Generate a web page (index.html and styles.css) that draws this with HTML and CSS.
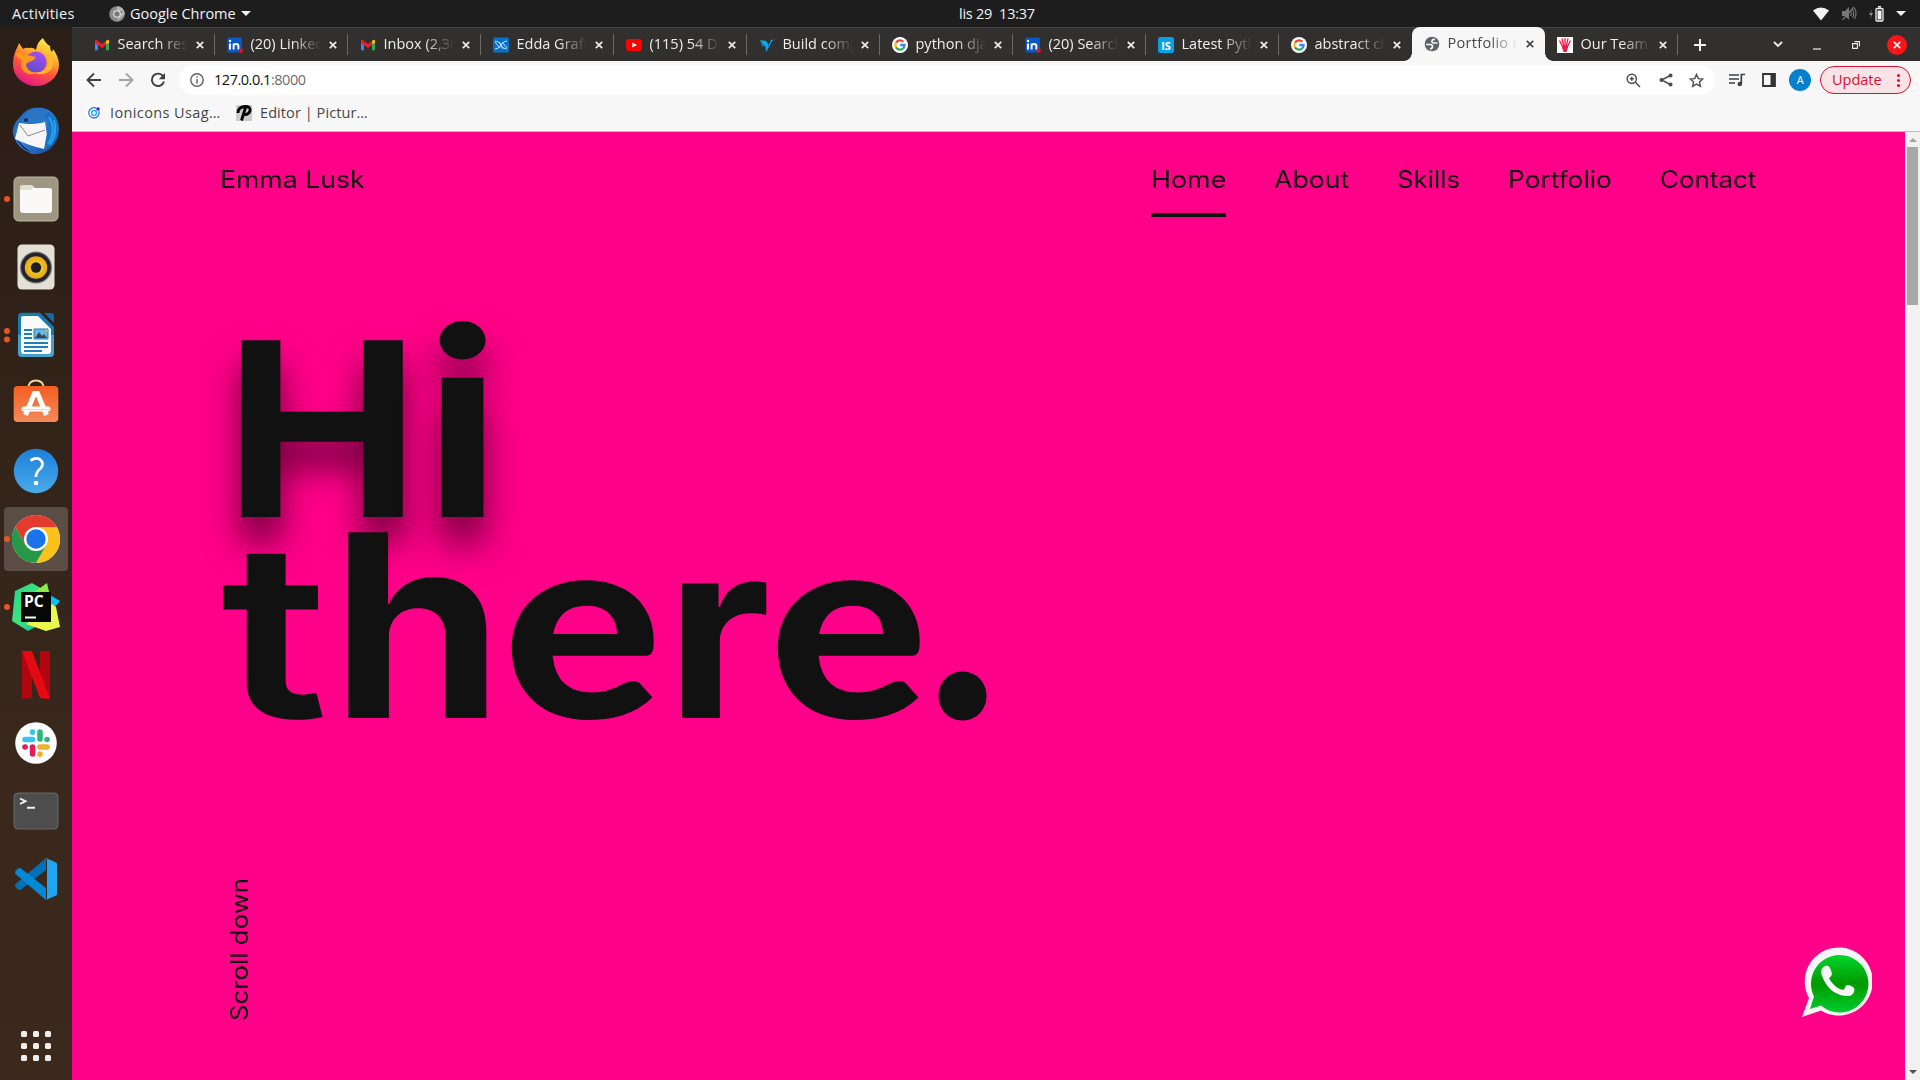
FILE: index.html
```html
<!DOCTYPE html>
<html lang="en">
<head>
<meta charset="utf-8">
<title>Portfolio</title>
<link rel="stylesheet" href="styles.css">
</head>
<body>
<svg class="defs" width="0" height="0">
  <defs>
    <linearGradient id="ffOuter" x1=".8" y1="0" x2=".35" y2="1"><stop offset="0" stop-color="#fff44f"/><stop offset=".35" stop-color="#ffb02e"/><stop offset=".62" stop-color="#ff5a36"/><stop offset="1" stop-color="#e31587"/></linearGradient>
    <linearGradient id="ffGlobe" x1=".7" y1="0" x2=".3" y2="1"><stop offset="0" stop-color="#a94df0"/><stop offset="1" stop-color="#5b4fd0"/></linearGradient>
    <linearGradient id="tb" x1="0" y1="0" x2="1" y2="1"><stop offset="0" stop-color="#1b5fb8"/><stop offset=".5" stop-color="#2c7fd4"/><stop offset="1" stop-color="#1a3f91"/></linearGradient>
    <linearGradient id="orange" x1="0" y1="0" x2="0" y2="1"><stop offset="0" stop-color="#f55d22"/><stop offset="1" stop-color="#f38a5c"/></linearGradient>
    <linearGradient id="help" x1="0" y1="0" x2="0" y2="1"><stop offset="0" stop-color="#1b7fd9"/><stop offset="1" stop-color="#4aabe9"/></linearGradient>
    <linearGradient id="wa" x1="0" y1="0" x2="0" y2="1"><stop offset="0" stop-color="#00d42c"/><stop offset=".5" stop-color="#009a00"/><stop offset="1" stop-color="#00cc2c"/></linearGradient>
    <linearGradient id="pc" x1="0" y1="0" x2="1" y2="1"><stop offset="0" stop-color="#21d789"/><stop offset=".5" stop-color="#3ee27e"/><stop offset="1" stop-color="#0fb8a0"/></linearGradient>
    <radialGradient id="cone"><stop offset="0" stop-color="#ffd84a"/><stop offset="1" stop-color="#e3a90f"/></radialGradient>
  </defs>
  <symbol id="x" viewBox="0 0 8 8"><path d="M.8.8l6.4 6.4M7.2.8L.8 7.2" fill="none" stroke="currentColor" stroke-width="1.7"/></symbol>
  <symbol id="gmail" viewBox="0 0 16 16"><path d="M1 4v9.300h3V7z" fill="#4285f4"/><path d="M15 4v9.300h-3V7z" fill="#34a853"/><path d="M12 7V4l1.500-1.200Q15 2.500 15 4v2z" fill="#fbbc04"/><path d="M4 4L2.500 2.800Q1 2.500 1 4v2l7 5 4-3V4L8 7z" fill="#ea1d2d"/></symbol>
  <symbol id="linkedin" viewBox="0 0 16 16"><rect width="14.500" height="15" x=".5" y=".5" rx="1.500" fill="#0a58c4"/><path d="M3 6.500v6" stroke="#fff" stroke-width="2"/><circle cx="3" cy="4" r="1.200" fill="#fff"/><path d="M6.600 12.500v-6M6.600 9q0-2 2.400-2t2.400 2v3.500" fill="none" stroke="#fff" stroke-width="1.900"/><circle cx="13.700" cy="13.700" r="2.200" fill="#e81123"/></symbol>
  <symbol id="google" viewBox="0 0 16 16"><circle cx="8" cy="8" r="8" fill="#fff"/><g fill="none" stroke-width="2.300"><path d="M4 5.600A4.700 4.700 0 0 1 11.400 4.700" stroke="#ea4335"/><path d="M4 5.600A4.700 4.700 0 0 0 4 10.400" stroke="#fbbc05"/><path d="M4 10.400A4.700 4.700 0 0 0 11.200 11.400" stroke="#34a853"/><path d="M11.200 11.400A4.700 4.700 0 0 0 12.600 8H8.200" stroke="#4285f4"/></g></symbol>
</svg>

<div class="screen">
  <header class="panel">
    <span class="activities">Activities</span>
    <span class="app">
      <svg width="16" height="16" viewBox="0 0 16 16"><circle cx="8" cy="8" r="7.800" fill="#8a8a8a"/><path d="M8 .2A7.800 7.800 0 0 1 15.800 8L8 15.800 11 9 14.500 5H8z" fill="#b5b5b5"/><circle cx="8" cy="8" r="3.800" fill="#e8e8e8"/><circle cx="8" cy="8" r="2.700" fill="#777"/></svg>
      Google Chrome<i class="caret"></i>
    </span>
    <span class="clock">lis 29&nbsp; 13:37</span>
    <span class="status">
      <svg width="16" height="14" viewBox="0 0 16 14"><path d="M0 3.500Q8-2.500 16 3.500L8 13.500z" fill="#f2f2f2"/></svg>
      <svg width="16" height="15" viewBox="0 0 16 15"><path d="M1 5h3l4-4v13L4 10H1z" fill="#777"/><path d="M9.500 5q1.500 2.500 0 5M11.500 3.500q2.500 4 0 8M13.500 2q3 5.500 0 11M1.500 14L13 1" fill="none" stroke="#777" stroke-width="1.200"/></svg>
      <svg width="15" height="16" viewBox="0 0 15 16"><path d="M3 3L0 9h2l-1 4 3-6H2z" fill="#888"/><rect x="7" y="2.500" width="7" height="12.500" rx="1" fill="none" stroke="#f2f2f2" stroke-width="1.300"/><path d="M9 .8h3" stroke="#f2f2f2" stroke-width="1.600"/><path d="M8.500 4.500h4V13.500h-4z" fill="#f2f2f2"/></svg>
      <i class="caret"></i>
    </span>
  </header>

  <div class="desktop">
    <nav class="dock">
      <div class="cell"><svg width="46" height="48" viewBox="0 0 46 48"><path d="M3 12Q5 8 6 5l4 6q3-2 6-1 4-1 7 2Q24 4 30 0q2 5 7 8 0 4 2 6 1-2 1-3 6 8 6 16a23 21 0 0 1-46 0Q0 18 3 12z" fill="url(#ffOuter)"/><circle cx="23" cy="24" r="10.500" fill="url(#ffGlobe)"/><path d="M2 16q6-3 11 1 5 1 10 2-2 4-7 5-3 1-3 4 2 6 10 7-9 4-14-4-2-5 0-9-4-2-7-6z" fill="#ff9a1f"/><path d="M33 18q4 7-1 13-5 5-13 3 13 6 20-4 3-7-2-13z" fill="#ffb62e"/></svg></div>
      <div class="cell"><svg width="48" height="48" viewBox="0 0 48 48"><path d="M8 10Q14 2 21 1q18-3 25 14 4 16-8 27-8 6-18 5-14-5-18-17Q-2 20 8 10z" fill="url(#tb)"/><path d="M12 10q4-8 12-9 9 2 9 9-1 5-9 6-7 0-14-1z" fill="#2b75c6"/><path d="M4 31q5 10 14 14L9 37z" fill="#1b1147"/><path d="M7 16l9 1q10 0 17-2l2 13-3 14q-14-3-29-10z" fill="#f6f6f8"/><path d="M8 18l8 11 17-6" fill="none" stroke="#888" stroke-width="1"/><path d="M31 9q8 7 4 17-2 8-2 17 11-7 13-17 1-13-9-21z" fill="#1972c4"/><path d="M37 10q8 13-1 27M42 13q4 13-4 25" stroke="#2aa0ea" stroke-width="2" fill="none"/><circle cx="14" cy="13" r="2" fill="#16335a"/></svg></div>
      <div class="cell"><i class="dot"></i><svg width="46" height="46" viewBox="0 0 46 46"><rect x="1" y="1" width="44" height="44" rx="4.500" fill="#9f9681" stroke="#bbb5a4"/><path d="M7 12q0-3 2-3h10l3 3H36q3 0 3 3v8H7z" fill="#e3dfd3"/><rect x="7" y="12" width="32" height="25" rx="3" fill="#faf9f8"/><path d="M7 11h13l-2 3H7z" fill="#e3dfd3"/></svg></div>
      <div class="cell"><svg width="38" height="46" viewBox="0 0 38 46"><rect x=".5" y=".5" width="37" height="45" rx="4.500" fill="#e5e0d6"/><circle cx="19" cy="23.500" r="16" fill="#6f7079"/><circle cx="19" cy="23.500" r="14.800" fill="#23232b"/><circle cx="19" cy="23.500" r="11.300" fill="url(#cone)"/><circle cx="19" cy="23.500" r="5.200" fill="#1e1e20"/></svg></div>
      <div class="cell"><i class="dot two"></i><svg width="38" height="46" viewBox="0 0 38 46"><path d="M5 .8H23L37 15v26q0 4-4 4H5q-4 0-4-4V5q0-4.200 4-4.200z" fill="#167bb3"/><path d="M1 23h36v18q0 4-4 4H5q-4 0-4-4z" fill="#469ecb"/><path d="M6 4h15l13 13v22q0 3-3 3H7q-3 0-3-3V6q0-2 2-2z" fill="#fafafa"/><path d="M27 1h7q3 0 3 3v7z" fill="#0d6ca5"/><path d="M7 18h8M7 22h8M7 26h8M7 31h24M7 35h24M7 39h18" stroke="#1d80b9" stroke-width="2"/><path d="M17 17h14v10H17z" fill="#69b8e1" stroke="#1d80b9"/><path d="M18 26l4-6 3 4 2-2 3 4z" fill="#3c4650"/><path d="M28 17.500h2.500v3z" fill="#ffbd25"/></svg></div>
      <div class="cell"><svg class="up" width="46" height="44" viewBox="0 0 46 44"><path d="M15 9Q16 1.500 23 1.500T31 9" fill="none" stroke="#efd59d" stroke-width="1.800"/><rect x=".7" y="7" width="44.600" height="36" rx="4" fill="url(#orange)"/><path d="M12.500 36L21.500 14.500h3L33.500 36" fill="none" stroke="#fff" stroke-width="5"/><path d="M11 30h24" stroke="#fff" stroke-width="5" stroke-linecap="round"/><path d="M9 30.500h28" stroke="#eecdbb" stroke-width=".8"/></svg></div>
      <div class="cell"><svg width="46" height="46" viewBox="0 0 46 46"><circle cx="23" cy="23" r="22.200" fill="url(#help)"/><path d="M17.500 12.500Q23 9 27 11.500 31.500 15 28 20 23 24 23 28v1" fill="none" stroke="#fff" stroke-width="2.800"/><circle cx="23" cy="35" r="2.300" fill="#fff"/></svg></div>
      <div class="cell active"><i class="dot"></i><svg width="48" height="48" viewBox="0 0 48 48"><circle cx="24" cy="24" r="24" fill="#fff"/><path d="M24 24V12H44.800A24 24 0 0 0 3.200 12L13.600 30z" fill="#e33b2e"/><path d="M24 12H44.800A24 24 0 0 1 24 48L34.400 30z" fill="#fcc219"/><path d="M13.600 30L3.200 12A24 24 0 0 0 24 48L34.400 30z" fill="#279847"/><circle cx="24" cy="24" r="12" fill="#fff"/><circle cx="24" cy="24" r="9.700" fill="#1a73e8"/></svg></div>
      <div class="cell"><i class="dot"></i><svg width="48" height="48" viewBox="0 0 48 48"><path d="M3 8L20 0l12 7-5 35-11 6L0 38z" fill="url(#pc)"/><path d="M21 10L35 0l3 13-12 5z" fill="#8bea4c"/><path d="M38 12l10 6-8 9-6-8z" fill="#07c3f2"/><path d="M14 41l26-20 4 3 4 20-14 4z" fill="#e9f84a"/><path d="M9 9h30v30H9z" fill="#050805"/><text class="pc-text" x="12" y="23.500">PC</text><path d="M13 34.500h11" stroke="#fff" stroke-width="2"/></svg></div>
      <div class="cell"><svg width="28" height="48" viewBox="0 0 28 48"><path d="M0 0h10v47L0 48zM18 0h10v48l-10-1z" fill="#b1060f"/><path d="M0 0h10l18 48-10-1z" fill="#e50914"/></svg></div>
      <div class="cell"><svg width="42" height="42" viewBox="0 0 42 42"><circle cx="21" cy="21" r="20.800" fill="#fff"/><g stroke-width="5.600" stroke-linecap="round"><path d="M10 17.500h7.500M17.500 10v.1" stroke="#36c5f0"/><path d="M25 10v7M32 17.500h.1" stroke="#2eb67d"/><path d="M25 25h7M25 32v.1" stroke="#ecb22e"/><path d="M17.500 25v7M10 25h.1" stroke="#e01e5a"/></g></svg></div>
      <div class="cell"><svg width="46" height="38" viewBox="0 0 46 38"><rect x="1" y="1" width="44" height="36" rx="4" fill="#4d4d4d" stroke="#696969"/><path d="M7 6.500l5.500 2.700L7 12M14 15.800h8" fill="none" stroke="#f2f2f2" stroke-width="1.900"/></svg></div>
      <div class="cell"><svg width="42" height="42" viewBox="0 0 42 42"><path d="M31 0v12L6 31.500q-2 1-3 0L.5 29q-1-1.500 0-3z" fill="#0070b7"/><path d="M31 42V30L6 10.500q-2-1-3 0L.5 13q-1 1.500 0 3z" fill="#0089d6"/><path d="M31 0l10 4.500q1 .5 1 1.500v30q0 1-1 1.500L31 42q1-1 1-2V2z" fill="#22a5f1"/></svg></div>
      <div class="apps"><i></i><i></i><i></i><i></i><i></i><i></i><i></i><i></i><i></i></div>
    </nav>

    <section class="browser">
      <div class="tabs">
        <div class="tab"><svg class="fav"><use href="#gmail"/></svg><span>Search results</span><svg class="close"><use href="#x"/></svg></div>
        <div class="tab"><svg class="fav"><use href="#linkedin"/></svg><span>(20) LinkedIn</span><svg class="close"><use href="#x"/></svg></div>
        <div class="tab"><svg class="fav"><use href="#gmail"/></svg><span>Inbox (2,304)</span><svg class="close"><use href="#x"/></svg></div>
        <div class="tab"><svg class="fav" viewBox="0 0 16 16"><rect width="16" height="15" y=".5" rx="1.500" fill="#0870c8"/><path d="M2 4q4 0 6 4t6 4M2 12q4 0 6-4t6-4M2 5l5 6M9 5l5 6M6 5l3 3M7 8l3 4" fill="none" stroke="#b9e2ff" stroke-width="1"/></svg><span>Edda Grafika</span><svg class="close"><use href="#x"/></svg></div>
        <div class="tab"><svg class="fav" viewBox="0 0 16 16"><rect width="16" height="12" y="2" rx="3" fill="#f00"/><path d="M6.300 5.500v5L11 8z" fill="#fff"/></svg><span>(115) 54 Django</span><svg class="close"><use href="#x"/></svg></div>
        <div class="tab"><svg class="fav" viewBox="0 0 16 16"><path d="M1 3l6 1 3 4 2-5 4-.5-3 1.500-3 6-3 5-.5-5z" fill="#12a6ee"/><path d="M1 3l7 7-5-1zM7 4l3 4v3z" fill="#0786cc"/></svg><span>Build components</span><svg class="close"><use href="#x"/></svg></div>
        <div class="tab"><svg class="fav"><use href="#google"/></svg><span>python django</span><svg class="close"><use href="#x"/></svg></div>
        <div class="tab"><svg class="fav"><use href="#linkedin"/></svg><span>(20) Search</span><svg class="close"><use href="#x"/></svg></div>
        <div class="tab"><svg class="fav" viewBox="0 0 16 16"><rect width="16" height="16" rx="2.500" fill="#0aa0e8"/><text class="is-text" x="8" y="12.500">IS</text></svg><span>Latest Python</span><svg class="close"><use href="#x"/></svg></div>
        <div class="tab last"><svg class="fav"><use href="#google"/></svg><span>abstract clip</span><svg class="close"><use href="#x"/></svg></div>
        <div class="tab current"><svg class="fav" viewBox="0 0 16 16"><circle cx="8" cy="8" r="7.300" fill="#5f6368"/><path d="M2 8.500h4.500q2 0 2 2T6 13M13.500 7H10Q7.500 7 8 5t3-1.500" fill="none" stroke="#f7f7f7" stroke-width="1.700"/></svg><span>Portfolio new</span><svg class="close"><use href="#x"/></svg></div>
        <div class="tab"><svg class="fav" viewBox="0 0 16 16"><path d="M0 0h16v16H0z" fill="#fff"/><path d="M8 1v14M5 1.500l2 9M11 1.500l-2 9M2.500 3.500l4.500 9M13.500 3.500l-4.500 9" fill="none" stroke="#ef1746" stroke-width="1.300"/><path d="M5 10h6l-1.500 5h-3z" fill="#ef1746"/></svg><span>Our Team</span><svg class="close"><use href="#x"/></svg></div>
        <svg class="plus" width="12" height="12" viewBox="0 0 12 12"><path d="M6 0v12M0 6h12" stroke="#f2f2f2" stroke-width="2"/></svg>
        <div class="window">
          <svg width="10" height="7" viewBox="0 0 10 7"><path d="M1 1l4 4 4-4" fill="none" stroke="#eee" stroke-width="1.800"/></svg>
          <svg width="8" height="7" viewBox="0 0 8 7"><path d="M0 5h8" stroke="#eee" stroke-width="1.200"/></svg>
          <svg width="8" height="8" viewBox="0 0 8 8"><path d="M.6 2.600h4.800v4.800H.6zM2.500.6h4.900v5" fill="none" stroke="#eee" stroke-width="1.100"/></svg>
          <b><svg class="close"><use href="#x"/></svg></b>
        </div>
      </div>

      <div class="toolbar">
        <svg width="16" height="16" viewBox="0 0 16 16"><path d="M15 8H2M8 1.500L1.500 8 8 14.500" fill="none" stroke="#3c4043" stroke-width="1.900"/></svg>
        <svg width="16" height="16" viewBox="0 0 16 16"><path d="M1 8h13M8 1.500L14.500 8 8 14.500" fill="none" stroke="#a3a4a6" stroke-width="1.900"/></svg>
        <svg width="16" height="16" viewBox="0 0 16 16"><path d="M13.300 4.500A6.200 6.200 0 1 0 14 9.500" fill="none" stroke="#3c4043" stroke-width="1.900"/><path d="M15 1v6.200H8.800z" fill="#3c4043"/></svg>
        <div class="omnibox">
          <svg width="14" height="14" viewBox="0 0 14 14"><circle cx="7" cy="7" r="6.200" fill="none" stroke="#5f6368" stroke-width="1.400"/><path d="M7 6v4.500M7 3.300v1.500" stroke="#5f6368" stroke-width="1.500"/></svg>
          <span class="url">127.0.0.1<em>:8000</em></span>
          <svg width="15" height="15" viewBox="0 0 15 15"><circle cx="5.800" cy="5.800" r="4.600" fill="none" stroke="#4a4d51" stroke-width="1.500"/><path d="M9.300 9.300l4.700 4.700M3.800 5.800h4M5.800 3.800v4" stroke="#4a4d51" stroke-width="1.500"/></svg>
          <svg width="14" height="14" viewBox="0 0 14 14"><path d="M11.500 2.500L2.500 7l9 4.500" fill="none" stroke="#4a4d51" stroke-width="1.400"/><circle cx="11.500" cy="2.500" r="2" fill="#4a4d51"/><circle cx="2.500" cy="7" r="2" fill="#4a4d51"/><circle cx="11.500" cy="11.500" r="2" fill="#4a4d51"/></svg>
          <svg width="15" height="15" viewBox="0 0 15 15"><path d="M7.500 1.500l1.800 4.100 4.500.4-3.400 3 1 4.400-3.900-2.300-3.900 2.300 1-4.400-3.400-3 4.500-.4z" fill="none" stroke="#4a4d51" stroke-width="1.400"/></svg>
        </div>
        <div class="actions">
          <svg width="16" height="14" viewBox="0 0 16 14"><path d="M0 2h10M0 6h10M0 10h6M12.300 11V1.500H16" fill="none" stroke="#3c4043" stroke-width="1.700"/><circle cx="10.800" cy="11" r="2.300" fill="#3c4043"/></svg>
          <svg width="14" height="14" viewBox="0 0 14 14"><path d="M1 1h12v12H1z" fill="none" stroke="#333" stroke-width="1.800"/><path d="M8.500 1H13v12H8.500z" fill="#333"/></svg>
          <span class="avatar">A</span>
          <span class="update">Update<i></i></span>
        </div>
      </div>

      <div class="bookmarks">
        <svg width="16" height="16" viewBox="0 0 16 16"><circle cx="8" cy="8" r="8" fill="#fff"/><path d="M10.500 3.300A5.200 5.200 0 1 0 12.800 6" fill="none" stroke="#3c6cf4" stroke-width="1.300"/><circle cx="8" cy="8" r="2.400" fill="none" stroke="#16b8f4" stroke-width="1.500"/><circle cx="12" cy="4" r="1.800" fill="#4524e6"/></svg>
        <span class="ion">Ionicons Usag…</span>
        <svg class="pic" width="16" height="16" viewBox="0 0 16 16"><path d="M0 0h16v16H0z" fill="#ccc"/><path d="M9.500 2.500L5.500 15.500M2 8Q2 2 9 1.500q6 0 5 4.500-1.500 4-6 3.500" fill="none" stroke="#000" stroke-width="2.800"/></svg>
        <span class="edit">Editor | Pictur…</span>
      </div>

      <div class="viewport">
        <main class="page">
          <header class="site">
            <a class="brand">Emma Lusk</a>
            <nav class="menu">
              <a class="home"><span>Home</span></a><a class="about"><span>About</span></a><a class="skills"><span>Skills</span></a><a class="portfolio"><span>Portfolio</span></a><a class="contact"><span>Contact</span></a>
            </nav>
          </header>
          <h1 class="title">
            <span class="line hi"><span class="g-cap">H</span><span class="g-i">i</span></span>
            <span class="line"><span class="g-t">t</span><span class="g-h">h</span><span class="g-e">e</span><span class="g-r">r</span><span class="g-e g-e2">e</span><span class="g-dot">.</span></span>
          </h1>
          <a class="scroll">Scroll down</a>
          <svg class="whatsapp" width="70" height="72" viewBox="0 0 70 72"><path d="M0 71L7 52A34 34 0 1 1 19 64.500z" fill="#f5f5f5"/><path d="M8 63l4-12.500A28.700 28.700 0 1 1 19 59.500z" fill="url(#wa)"/><path d="M19 27Q19.500 20 24.500 19.500q4 0 5.500 9-2 3-3 4Q33.500 43 41.500 44l3-5q6 0 8 4 0 8-9 7Q25.500 48 19 27z" fill="#f7f7f7"/></svg>
        </main>
        <div class="scrollbar"><i class="arrow-up"></i><i class="thumb"></i><i class="arrow-down"></i></div>
      </div>
    </section>
  </div>
</div>
</body>
</html>
```
FILE: styles.css
```css
* { box-sizing: border-box; }
body {
  margin: 0;
  font: 14.5px/20px "Open Sans", "Noto Sans", sans-serif;
  overflow: hidden;
}
svg { flex: none; display: block; }
.defs { position: absolute; }
.screen { width: 1920px; height: 1080px; display: flex; flex-direction: column; }

/* top panel */
.panel {
  height: 27px;
  flex: none;
  background: #1d1d1d;
  color: #f2f2f2;
  display: grid;
  grid-template-columns: 97px 850px 1fr auto;
  align-items: center;
  padding: 0 14px 0 12px;
}
.activities { letter-spacing: .3px; }
.app { display: flex; align-items: center; gap: 5px; }
.clock { letter-spacing: -.25px; }
.status { display: flex; align-items: center; gap: 12px; }
.caret { border: 5px solid transparent; border-top: 5px solid #f2f2f2; border-bottom: 0; }

/* dock */
.desktop { flex: 1; display: flex; min-height: 0; }
.dock {
  width: 72px;
  flex: none;
  background: linear-gradient(#2b1e16, #3a281c 75%, #3c281d);
  display: flex;
  flex-direction: column;
  padding-top: 2px;
}
.cell { height: 68px; display: flex; align-items: center; justify-content: center; position: relative; }
.cell:first-child svg { margin-top: -2px; }
.cell.active::before { content: ""; position: absolute; inset: 2px 4px; border-radius: 4px; background: rgba(255, 255, 255, .19); }
.cell svg { position: relative; }
.cell .up { margin-top: -4px; }
.dot { position: absolute; left: 4px; top: 31px; width: 6px; height: 6px; border-radius: 50%; background: #e95420; }
.dot.two { top: 27px; box-shadow: 0 8.5px 0 #e95420; }
.pc-text { font: 700 15.500px "Open Sans", sans-serif; fill: #fff; }
.apps { margin: auto auto 19px; display: grid; grid-template-columns: repeat(3, 6px); gap: 6px; }
.apps i { height: 6px; border-radius: 1.5px; background: #f0eeed; }

/* tab strip */
.browser { flex: 1; display: flex; flex-direction: column; min-width: 0; }
.tabs {
  height: 34px;
  flex: none;
  background: #32302f;
  border-top: 1px solid #464443;
  display: flex;
  align-items: center;
  padding-left: 10px;
  color: #eee;
}
.tab { width: 133px; height: 33px; flex: none; display: flex; align-items: center; padding-left: 11.500px; position: relative; }
.tab::after { content: ""; position: absolute; right: 0; top: 6px; width: 1px; height: 21px; background: #6a6968; }
.tab.current::after, .tab.last::after { display: none; }
.fav { width: 16px; height: 16px; margin-right: 8px; }
.tab span {
  width: 70px;
  margin-top: -2px;
  overflow: hidden;
  white-space: nowrap;
  -webkit-mask-image: linear-gradient(90deg, #000 58%, transparent);
  mask-image: linear-gradient(90deg, #000 58%, transparent);
}
.close { width: 8px; height: 8px; }
.tab .close { margin-left: 8px; }
.tab.current { background: #f7f7f7; color: #45474a; border-radius: 8px 8px 0 0; height: 34px; margin-top: -1px; }
.tab.current::before { content: ""; position: absolute; left: -8px; right: -8px; bottom: 0; height: 8px; background: radial-gradient(circle at 0 0, transparent 7.500px, #f7f7f7 8px) left / 8px 8px no-repeat, radial-gradient(circle at 100% 0, transparent 7.500px, #f7f7f7 8px) right / 8px 8px no-repeat; }
.tab.current span { letter-spacing: .3px; }
.is-text { font: 700 11px "Open Sans", sans-serif; fill: #fff; text-anchor: middle; }
.plus { margin-left: 16px; }
.window { margin-left: auto; padding-right: 13px; display: flex; align-items: center; }
.window > :nth-child(2) { margin: 6px 35px 0 30px; }
.window b { width: 20px; height: 20px; border-radius: 50%; background: #fb1418; display: grid; place-items: center; margin-left: 27px; }
.window > :nth-child(1) { margin-right: 0; }
.window > :nth-child(3) { margin-left: -4px; }

/* toolbar */
.toolbar { height: 38px; flex: none; background: #f7f7f7; display: flex; align-items: center; padding: 0 9px 0 14px; gap: 16px; }
.omnibox { width: 1536px; height: 30px; margin-left: -3px; border-radius: 15px; background: #fff; display: flex; align-items: center; padding: 0 11px; }
.url { flex: 1; margin-left: 10px; color: #111; letter-spacing: -.47px; }
.url em { font-style: normal; color: #6b6e72; }
.omnibox > :nth-child(4) { margin: 0 16px 0 18px; }
.actions { flex: 1; display: flex; align-items: center; justify-content: space-between; margin-left: -2px; }
.actions > :nth-child(2) { margin-left: 8px; }
.avatar { width: 22px; height: 22px; margin-left: 5px; border-radius: 50%; background: #0680cd; color: #fff; font-size: 11px; line-height: 22px; text-align: center; }
.update { width: 91px; height: 28px; border: 1.500px solid #d9102f; border-radius: 14px; background: #f9e3e6; color: #d9102f; display: flex; align-items: center; justify-content: space-between; padding: 0 10px 0 11px; }
.update i { width: 3px; height: 3px; border-radius: 50%; background: #e00b2b; box-shadow: 0 -5px #e00b2b, 0 5px #e00b2b; }

/* bookmarks */
.bookmarks { height: 33px; flex: none; background: #f7f7f7; border-bottom: 1px solid #bdbdbd; display: flex; align-items: center; padding: 0 0 4px 14px; color: #45474a; gap: 8px; }
.ion { letter-spacing: .38px; width: 110px; white-space: nowrap; }
.edit { letter-spacing: .08px; }
.pic { margin-left: 8px; }

/* page */
.viewport { flex: 1; display: flex; min-height: 0; }
.page { flex: 1; position: relative; background: #ff0088; color: #111; font-family: Inter, sans-serif; padding-left: 147.500px; display: flex; flex-direction: column; }
.site { height: 85px; display: flex; justify-content: space-between; font-size: 24px; line-height: 30px; padding: 33px 148px 0 2.500px; }
.brand { transform: scaleX(1.11); transform-origin: 0 0; margin-left: -2px; }
.menu { display: flex; gap: 48px; }
.menu a { height: 52px; }
.menu span { display: block; transform-origin: 0 0; white-space: nowrap; }
.home { width: 75px; border-bottom: 4px solid #111; }
.home span { transform: scaleX(1.12); }
.about { width: 75px; }
.about span { transform: scaleX(1.11); }
.skills { width: 63px; }
.skills span { transform: scaleX(1.075); }
.portfolio { width: 104px; }
.portfolio span { transform: scaleX(1.095); }
.contact { width: 97px; }
.contact span { transform: scaleX(1.08); }

/* display heading: each glyph is widened from the baseline */
.title { margin: 112px 0 0; font-size: 243px; line-height: 200.700px; font-weight: 700; }
.line { display: flex; height: 200.700px; }
.line > span { flex: none; transform-origin: 0 188.700px; }
.hi { text-shadow: 0 25px 34px rgba(0, 0, 0, .58); padding-left: 4.200px; }
.g-cap { width: 200px; transform: scaleX(1.08); }
.g-i { font-weight: 700; transform: scale(1.17, 1.05); }
.g-t { width: 111.500px; font-weight: 600; transform: scaleX(1.26); }
.g-h { width: 171.900px; transform: scale(1.14, 1.05); }
.g-r { width: 102.400px; transform: scale(1.06, 1.015); }
.g-dot { transform: scale(1.17, 1.2); margin-left: 1px; }
.line > .g-e { font-family: Lato, sans-serif; font-weight: 900; width: 163.600px; margin-top: -5.700px; transform-origin: 0 194.400px; transform: scale(1.222, 1.083); }
.line > .g-e2 { width: 145.600px; }

.scroll { writing-mode: vertical-rl; transform: rotate(180deg) scaleY(1.075); align-self: flex-start; margin: 153px 0 0 5px; font-size: 24px; line-height: 30px; }
.whatsapp { position: absolute; right: 33px; bottom: 62px; }

.scrollbar { width: 15px; background: #f1f1f1; display: flex; flex-direction: column; align-items: center; }
.thumb { width: 11px; height: 158px; background: #a8a8a8; margin-top: 5px; }
.arrow-up { margin-top: 6px; border: 4px solid transparent; border-bottom-color: #a3a3a3; border-top: 0; }
.arrow-down { margin: auto 0 6px; border: 4px solid transparent; border-top-color: #505050; border-bottom: 0; }
```
